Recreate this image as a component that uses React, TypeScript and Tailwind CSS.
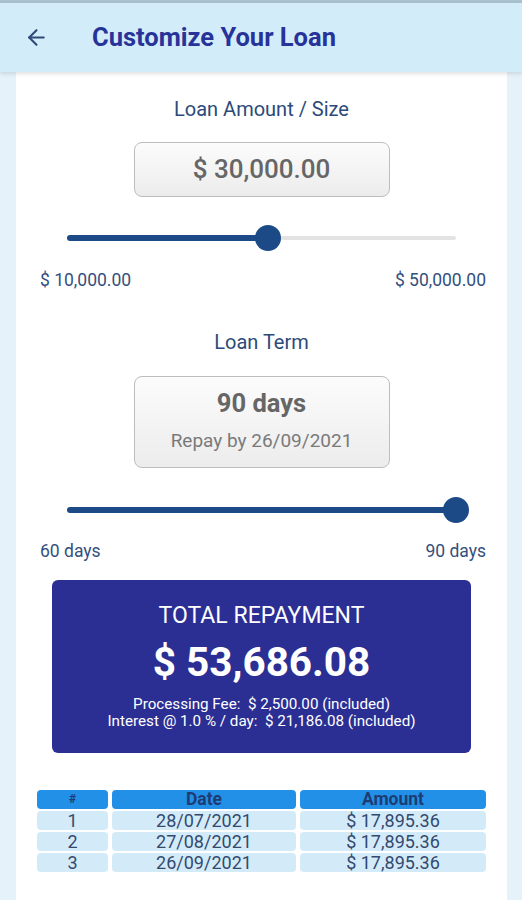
import { ArrowLeft } from 'lucide-react';

const rows = [
    { n: 1, date: '28/07/2021', amount: '$ 17,895.36' },
    { n: 2, date: '27/08/2021', amount: '$ 17,895.36' },
    { n: 3, date: '26/09/2021', amount: '$ 17,895.36' },
];

function Slider({ fill }: { fill: string }) {
    return (
        <div className="mx-[51px] h-[26px] relative flex items-center">
            <div className="w-full h-[4px] rounded-full bg-[#e3e3e3]" />
            <div className={`absolute left-0 h-[6px] rounded-full bg-[#1c4a86] ${fill}`} />
            <div className={`absolute w-[26px] h-[26px] -ml-[13px] rounded-full bg-[#1c4a86] ${fill === 'w-full' ? 'left-full' : 'left-[201px]'}`} />
        </div>
    );
}

function Range({ min, max }: { min: string; max: string }) {
    return (
        <div className="ml-[24px] mr-[21px] flex justify-between text-[17.5px] leading-[22px] text-[#34507d]">
            <span>{min}</span>
            <span>{max}</span>
        </div>
    );
}

export default function App() {
    return (
        <div className="min-h-screen bg-[#e6f2fa] font-['Roboto',sans-serif]">
            <div className="h-[3px] bg-[#a9c1d1]" />
            {/* Header */}
            <header className="h-[69px] bg-[#d3ecf9] flex items-center relative z-10 shadow-[0_2px_4px_rgba(0,0,0,0.12)]">
                <ArrowLeft className="ml-[24px] w-[25px] h-[25px] text-[#2d4a78]" strokeWidth={2} />
                <h1 className="ml-[43px] text-[25.5px] font-bold text-[#28339a]">Customize Your Loan</h1>
            </header>

            <main className="ml-[16px] mr-[15px] bg-white min-h-[828px] pt-[25px]">
                <p className="text-center text-[20px] leading-[24px] text-[#2b4a7a]">Loan Amount / Size</p>
                <div className="mx-auto mt-[21px] w-[256px] h-[55px] rounded-[8px] border border-[#bdbdbd] bg-gradient-to-b from-[#fcfcfc] to-[#ececec] flex items-center justify-center">
                    <span className="text-[26px] font-medium text-[#666666]">$ 30,000.00</span>
                </div>
                <div className="mt-[28px]">
                    <Slider fill="w-[201px]" />
                </div>
                <div className="mt-[18px]">
                    <Range min="$ 10,000.00" max="$ 50,000.00" />
                </div>

                <p className="mt-[39px] text-center text-[20px] leading-[24px] text-[#2b4a7a]">Loan Term</p>
                <div className="mx-auto mt-[22px] w-[256px] h-[92px] rounded-[8px] border border-[#bdbdbd] bg-gradient-to-b from-[#fcfcfc] to-[#ececec] flex flex-col items-center pt-[12px] gap-[13px]">
                    <span className="text-[25.5px] leading-[28px] font-bold text-[#666666]">90 days</span>
                    <span className="text-[19px] leading-[22px] text-[#7a7a7a]">Repay by 26/09/2021</span>
                </div>
                <div className="mt-[29px]">
                    <Slider fill="w-full" />
                </div>
                <div className="mt-[17px]">
                    <Range min="60 days" max="90 days" />
                </div>

                {/* Total repayment */}
                <div className="mx-auto mt-[18px] w-[419px] h-[173px] rounded-[6px] bg-[#2b2f94] flex flex-col items-center text-white pt-[23px]">
                    <span className="text-[23px] leading-[26px]">TOTAL REPAYMENT</span>
                    <span className="mt-[10px] text-[40.5px] leading-[46px] font-bold">$ 53,686.08</span>
                    <span className="mt-[11px] text-[15.2px] leading-[17px]">Processing Fee:&nbsp; $ 2,500.00 (included)</span>
                    <span className="text-[15.2px] leading-[17px]">Interest @ 1.0 % / day:&nbsp; $ 21,186.08 (included)</span>
                </div>

                {/* Schedule */}
                <div className="mx-auto mt-[37px] w-[449px] grid grid-cols-[71px_184px_1fr] gap-x-[4px] gap-y-[2px] text-[18px] leading-[19px] text-[#33496f]">
                    <div className="rounded-[4px] bg-[#2390e8] text-center font-bold text-[#1e3c74] text-[12px] leading-[19px]">#</div>
                    <div className="rounded-[4px] bg-[#2390e8] text-center font-bold text-[#1e3c74] text-[17.5px]">Date</div>
                    <div className="rounded-[4px] bg-[#2390e8] text-center font-bold text-[#1e3c74] text-[17.5px]">Amount</div>
                    {rows.map(r => (
                        <>
                            <div key={`n${r.n}`} className="rounded-[4px] bg-[#d3ebf9] text-center">{r.n}</div>
                            <div key={`d${r.n}`} className="rounded-[4px] bg-[#d3ebf9] text-center">{r.date}</div>
                            <div key={`a${r.n}`} className="rounded-[4px] bg-[#d3ebf9] text-center">{r.amount}</div>
                        </>
                    ))}
                </div>
            </main>
        </div>
    );
}
